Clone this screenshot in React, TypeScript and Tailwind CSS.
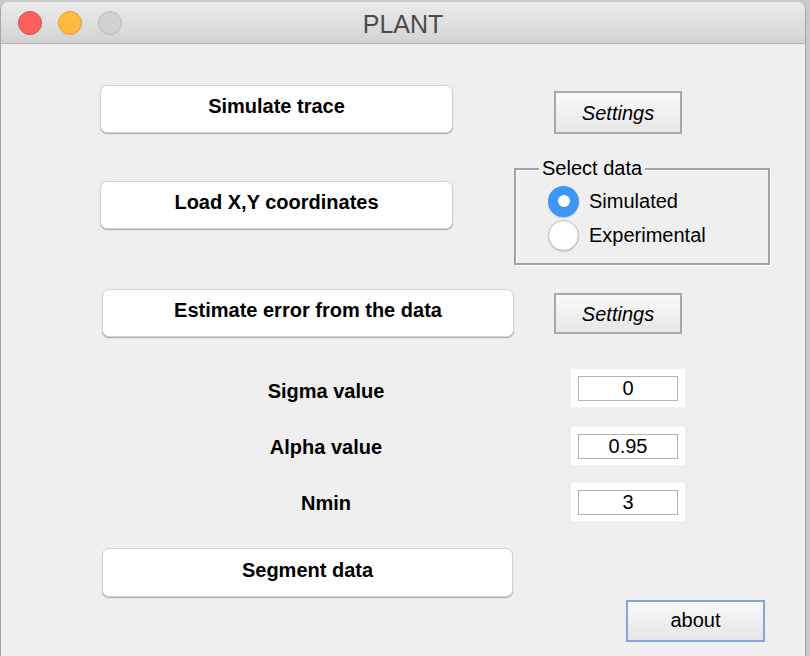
const push =
  "flex items-center justify-center rounded-[7px] border border-[#d2d2d2] bg-white pb-[6px] text-[20px] font-bold text-black shadow-[0_1px_1px_rgba(0,0,0,0.3)]";
const settings =
  "flex items-center justify-center border-2 border-[#a9a9a9] bg-gradient-to-b from-[#fafafa] to-[#e7e7e7] text-[20px] italic text-black";

function Light({ color, edge }: { color: string; edge: string }) {
  return <span className={`size-[24px] rounded-full border ${color} ${edge}`} />;
}

function Field({ label, value, gap, nudge }: { label: string; value: string; gap: string; nudge?: string }) {
  return (
    <div className={`flex h-[38px] items-center ${gap}`}>
      <div className={`ml-[225px] w-[200px] text-center text-[20px] font-bold leading-6 text-black ${nudge ?? ""}`}>{label}</div>
      <div className="ml-[145px] flex h-[38px] w-[114px] items-center justify-center bg-white">
        <div className="flex h-[25px] w-[100px] items-center justify-center border border-[#b4b4b4] text-[20px] leading-6 text-black">
          {value}
        </div>
      </div>
    </div>
  );
}

function Radio({ label, checked }: { label: string; checked?: boolean }) {
  return (
    <div className="flex h-[34px] items-center gap-[10px]">
      {checked ? (
        <span className="flex size-[31px] items-center justify-center rounded-full bg-[#3d96f7] shadow-[0_1px_1px_rgba(0,0,0,0.2)]">
          <span className="size-[12px] rounded-full bg-white" />
        </span>
      ) : (
        <span className="size-[31px] rounded-full border border-[#bcbcbc] bg-white shadow-[0_1px_1px_rgba(0,0,0,0.15)]" />
      )}
      <span className="text-[20px] leading-6 text-black">{label}</span>
    </div>
  );
}

export default function App() {
  return (
    <div className="h-[656px] w-[810px] overflow-hidden bg-[#c9c9c9] font-['Liberation_Sans',Arial,sans-serif]">
      <div className="mt-[2px] h-[654px] w-[806px] overflow-hidden rounded-t-[8px] border-x border-[#a6a6a6] bg-[#efefef]">
        <div className="grid h-[42px] grid-cols-[1fr_auto_1fr] items-center border-b border-[#b3b3b3] bg-gradient-to-b from-[#ebebeb] to-[#d3d3d3]">
          <div className="flex items-center gap-[16px] pl-[17px] pt-[1px]">
            <Light color="bg-[#fc605b]" edge="border-[#de4943]" />
            <Light color="bg-[#fdbc40]" edge="border-[#de9f34]" />
            <Light color="bg-[#d1d1d1]" edge="border-[#b9b9b9]" />
          </div>
          <div className="pt-[4px] text-[25px] leading-none text-[#4b4b4b]">PLANT</div>
          <div />
        </div>

        <div className="flex flex-col">
          <div className="mt-[41px] flex items-start">
            <button className={`ml-[99px] h-[48px] w-[353px] ${push}`}>Simulate trace</button>
            <button className={`ml-[101px] mt-[6px] h-[43px] w-[128px] ${settings}`}>Settings</button>
          </div>

          <div className="mt-[25px] flex items-start">
            <button className={`ml-[99px] mt-[22px] h-[48px] w-[353px] ${push}`}>Load X,Y coordinates</button>
            <div className="relative ml-[61px] mt-[9px] h-[97px] w-[256px] border-2 border-[#a2a2a2] shadow-[inset_1px_1px_0_#ffffff,1px_1px_0_#ffffff]">
              <span className="absolute left-[23px] top-[-14px] bg-[#efefef] px-[3px] text-[20px] leading-6 text-black">
                Select data
              </span>
              <div className="flex flex-col pl-[32px] pt-[14px]">
                <Radio label="Simulated" checked />
                <Radio label="Experimental" />
              </div>
            </div>
          </div>

          <div className="mt-[24px] flex items-start">
            <button className={`ml-[101px] h-[48px] w-[412px] ${push}`}>Estimate error from the data</button>
            <button className={`ml-[40px] mt-[4px] h-[41px] w-[128px] ${settings}`}>Settings</button>
          </div>

          <Field label="Sigma value" value="0" gap="mt-[32px]" nudge="pt-[6px]" />
          <Field label="Alpha value" value="0.95" gap="mt-[20px]" nudge="pt-[2px]" />
          <Field label="Nmin" value="3" gap="mt-[18px]" nudge="pt-[1px]" />

          <div className="mt-[27px] flex items-start">
            <button className={`ml-[101px] h-[49px] w-[411px] ${push}`}>Segment data</button>
            <button className="ml-[113px] mt-[52px] flex h-[42px] w-[139px] items-center justify-center border-2 border-[#80a7d6] bg-gradient-to-b from-[#f9f9f9] to-[#e6e6e6] pb-[3px] text-[20px] text-black">
              about
            </button>
          </div>
        </div>
      </div>
    </div>
  );
}
